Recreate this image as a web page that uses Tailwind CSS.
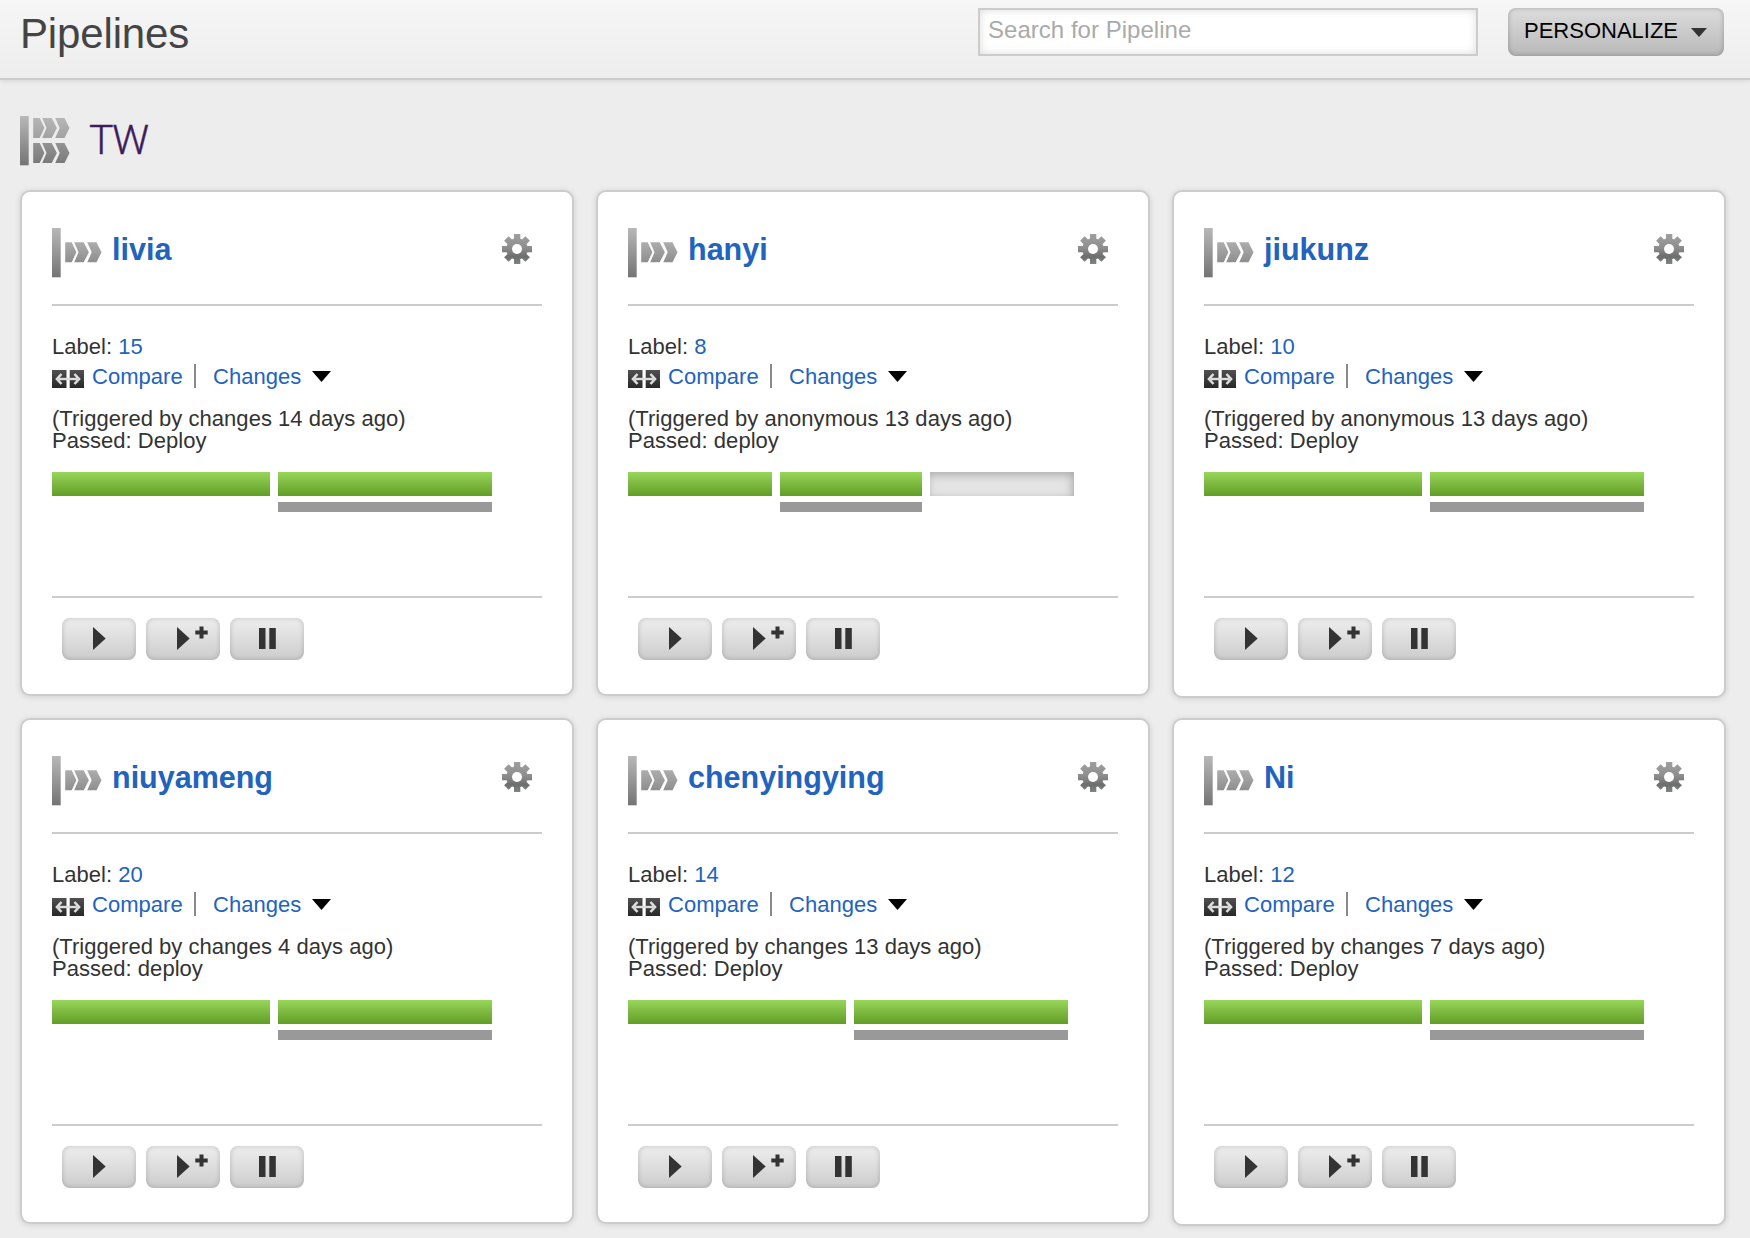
<!DOCTYPE html>
<html lang="en">
<head>
<meta charset="utf-8">
<title>Pipelines</title>
<script src="https://cdn.jsdelivr.net/npm/@tailwindcss/browser@4"></script>
</head>
<body class="bg-[#ededed] font-['Liberation_Sans',Arial,sans-serif] text-[22px] tracking-[0.03px] text-[#333] w-[1750px] h-[1238px] overflow-hidden">

<!-- Shared gradients and icon symbols -->
<svg width="0" height="0" class="absolute">
  <defs>
    <linearGradient id="bar" x1="0" y1="0" x2="0" y2="1"><stop offset="0" stop-color="#b8b8b8"/><stop offset="1" stop-color="#747474"/></linearGradient>
    <linearGradient id="mid" x1="0" y1="0" x2="0" y2="1"><stop offset="0" stop-color="#adadad"/><stop offset="1" stop-color="#8e8e8e"/></linearGradient>
    <linearGradient id="light" x1="0" y1="0" x2="0" y2="1"><stop offset="0" stop-color="#b6b6b6"/><stop offset="1" stop-color="#a2a2a2"/></linearGradient>
    <linearGradient id="dark" x1="0" y1="0" x2="0" y2="1"><stop offset="0" stop-color="#939393"/><stop offset="1" stop-color="#7a7a7a"/></linearGradient>
    <linearGradient id="gear" x1="0" y1="0" x2="0" y2="1"><stop offset="0" stop-color="#a0a0a0"/><stop offset=".45" stop-color="#8e8e8e"/><stop offset=".75" stop-color="#6c6f6d"/><stop offset="1" stop-color="#828282"/></linearGradient>
    <linearGradient id="tile" x1="0" y1="0" x2="0" y2="1"><stop offset="0" stop-color="#505050"/><stop offset="1" stop-color="#282828"/></linearGradient>
    <path id="chevrons" d="M0 0H6.500L11.200 10L6.500 20H0ZM9 0H18.500L23.700 10L18.500 20H9L13.300 10ZM22 0H31.300L36.300 10L31.300 20H22L26.500 10Z"/>
    <symbol id="i-pipeline" viewBox="0 0 50 50">
      <rect width="8.700" height="49.300" fill="url(#bar)"/>
      <use href="#chevrons" x="13.200" y="14.300" fill="url(#mid)"/>
    </symbol>
    <symbol id="i-group" viewBox="0 0 50 50">
      <rect width="8.700" height="49.300" fill="url(#bar)"/>
      <use href="#chevrons" x="13.200" y="2" fill="url(#light)"/>
      <use href="#chevrons" x="13.200" y="27" fill="url(#dark)"/>
    </symbol>
    <symbol id="i-gear" viewBox="0 0 30 30">
      <mask id="gm"><g fill="#fff">
        <circle cx="15" cy="15" r="10.700"/>
        <rect x="12" y="0" width="6.300" height="30"/><rect x="0" y="12" width="30" height="6.300"/>
        <rect x="11.800" y="0" width="6.400" height="30" transform="rotate(45 15 15)"/><rect x="11.800" y="0" width="6.400" height="30" transform="rotate(-45 15 15)"/>
      </g><circle cx="15" cy="15" r="5" fill="#000"/></mask>
      <rect width="30" height="30" fill="url(#gear)" mask="url(#gm)"/>
    </symbol>
    <symbol id="i-compare" viewBox="0 0 32 18">
      <rect width="14.500" height="18" fill="url(#tile)"/><rect x="17.700" width="14.300" height="18" fill="url(#tile)"/>
      <path d="M7 9H25" stroke="#ddd" stroke-width="2.400"/>
      <path d="M9.500 4L5 9L9.500 14M22.500 4L27 9L22.500 14" fill="none" stroke="#ddd" stroke-width="2.600"/>
    </symbol>
    <symbol id="i-play" viewBox="0 0 13 23"><path d="M0 0L12.700 11.500L0 23Z" fill="#333"/></symbol>
    <symbol id="i-plus" viewBox="0 0 13 13"><path d="M4.500 0.500H8.500V4.500H12.700V8.500H8.500V12.500H4.500V8.500H.3V4.500H4.500Z" fill="#333"/></symbol>
    <symbol id="i-pause" viewBox="0 0 17 21"><path d="M0 0H6.500V21H0ZM10.300 0H16.800V21H10.300Z" fill="#333"/></symbol>
  </defs>
</svg>

<header class="flex h-20 items-start border-b-2 border-[#ccc] bg-linear-to-b from-[#f6f6f6] to-[#ededed] pl-5 pr-[26px] shadow-[0_1px_5px_rgba(0,0,0,0.1)]">
  <h1 class="mt-2.5 text-[42px] leading-[48px] tracking-[-0.15px] text-[#444]">Pipelines</h1>
  <input type="text" placeholder="Search for Pipeline" class="ml-auto mt-2 h-12 w-[500px] border-2 border-[#ccc] bg-white px-2 pb-1 text-2xl placeholder:text-[#aaa] shadow-[inset_0_0_8px_rgba(0,0,0,0.15)]">
  <button class="ml-[30px] mt-2 flex h-12 w-[216px] items-center rounded-lg bg-linear-to-b from-[#ddd] to-[#b8b8b8] pl-4 pb-1 tracking-normal text-black shadow-[inset_0_0_5px_rgba(0,0,0,0.25)]">PERSONALIZE
    <svg class="ml-[13px] mt-1" width="16" height="9" viewBox="0 0 16 9"><path d="M0 0H16L8 9Z" fill="#333"/></svg>
  </button>
</header>

<main class="px-5">
  <div class="flex h-[110px] items-start pt-9">
    <svg width="50" height="50"><use href="#i-group"/></svg>
    <h2 class="ml-[19px] font-['Roboto',sans-serif] text-[41px] font-light leading-[48px] tracking-[-1.5px] text-[#3d1d5c] [-webkit-text-stroke:0.4px_#3d1d5c]">TW</h2>
  </div>
  <div id="cards" class="grid grid-cols-[554px_554px_554px] auto-rows-[508px] items-start gap-x-[22px] gap-y-5"></div>
</main>

<script>
const pipelines = [
  {name: 'livia', label: 15, by: 'changes 14 days ago', stage: 'Deploy', bars: [218, 214]},
  {name: 'hanyi', label: 8, by: 'anonymous 13 days ago', stage: 'deploy', bars: [144, 142, 144]},
  {name: 'jiukunz', label: 10, by: 'anonymous 13 days ago', stage: 'Deploy', bars: [218, 214], last: true},
  {name: 'niuyameng', label: 20, by: 'changes 4 days ago', stage: 'deploy', bars: [218, 214]},
  {name: 'chenyingying', label: 14, by: 'changes 13 days ago', stage: 'Deploy', bars: [218, 214]},
  {name: 'Ni', label: 12, by: 'changes 7 days ago', stage: 'Deploy', bars: [218, 214], last: true},
];
const button = inner => `<button class="relative flex h-[42px] w-[74px] items-start justify-center rounded-lg bg-linear-to-b from-[#eee] to-[#ccc] pt-[9px] shadow-[inset_0_0_5px_rgba(0,0,0,0.2)]">${inner}</button>`;
const bar = (w, i) => `<div style="width:${w}px">
    <div class="h-6 ${i < 2 ? 'bg-linear-to-b from-[#98d65b] to-[#629d23]' : 'bg-[#e4e4e4] shadow-[inset_-2px_3px_8px_rgba(0,0,0,0.25)]'}"></div>
    ${i === 1 ? '<div class="mt-1.5 h-2.5 bg-[#999]"></div>' : ''}
  </div>`;
document.getElementById('cards').innerHTML = pipelines.map(p => `
<section class="${p.last ? 'h-[508px]' : 'h-[506px]'} rounded-[10px] border-2 border-[#ccc] bg-white px-[30px] shadow-[0_1px_6px_rgba(0,0,0,0.13)]">
  <div class="flex h-[114px] items-start border-b-2 border-[#ccc] pt-9">
    <svg width="50" height="50"><use href="#i-pipeline"/></svg>
    <h3 class="ml-2.5 mt-[3px] text-[30.5px] font-bold leading-9 tracking-normal text-[#2163bd]">${p.name}</h3>
    <svg class="ml-auto mr-2.5 mt-1.5" width="30" height="30"><use href="#i-gear"/></svg>
  </div>
  <div class="h-[292px] border-b-2 border-[#ccc] pt-[26px]">
    <div class="leading-[30px]">Label: <a class="text-[#2163bd]">${p.label}</a></div>
    <div class="flex leading-[30px]">
      <svg class="mt-2" width="32" height="18"><use href="#i-compare"/></svg>
      <a class="ml-2 w-[102px] text-[#2163bd]">Compare</a>
      <span class="mt-0.5 h-6 w-0.5 bg-[#888]"></span>
      <a class="ml-[17px] text-[#2163bd]">Changes</a>
      <svg class="ml-[11px] mt-[9px]" width="19" height="11" viewBox="0 0 19 11"><path d="M0 0H19L9.500 11Z" fill="#000"/></svg>
    </div>
    <div class="mt-4 leading-[22px]">(Triggered by ${p.by})<br>Passed: ${p.stage}</div>
    <div class="mt-5 flex gap-2">${p.bars.map(bar).join('')}</div>
  </div>
  <div class="flex gap-2.5 pl-2.5 pt-5">
    ${button('<svg class="ml-px" width="13" height="23"><use href="#i-play"/></svg>')}
    ${button('<svg class="ml-px" width="13" height="23"><use href="#i-play"/></svg><svg class="absolute left-[49px] top-2" width="13" height="13"><use href="#i-plus"/></svg>')}
    ${button('<svg class="ml-px mt-px" width="17" height="21"><use href="#i-pause"/></svg>')}
  </div>
</section>`).join('');
</script>
</body>
</html>
